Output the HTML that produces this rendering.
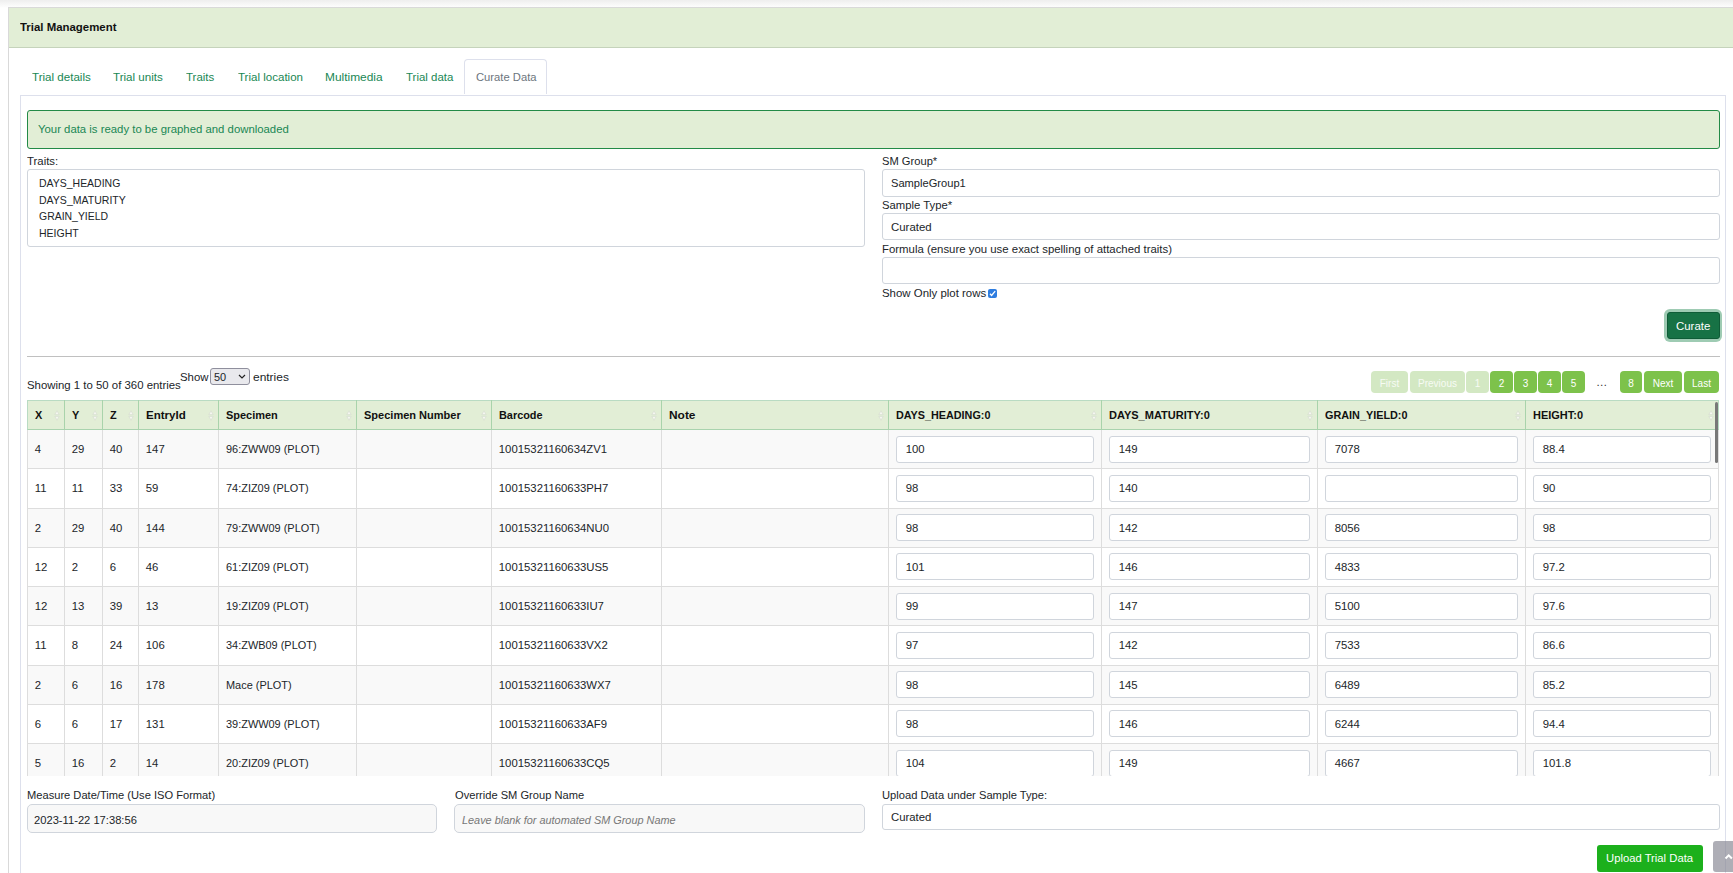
<!DOCTYPE html>
<html><head><meta charset="utf-8"><style>
html,body{margin:0;padding:0;}
body{width:1733px;height:873px;overflow:hidden;position:relative;background:#fff;font-family:"Liberation Sans",sans-serif;}
.t{position:absolute;line-height:1;white-space:nowrap;}
.b{position:absolute;}
</style></head><body>
<div class="b" style="left:0.00px;top:0.00px;width:1733.00px;height:8.00px;background:linear-gradient(#eeeeee,#ffffff);"></div>
<div class="b" style="left:8.00px;top:7.00px;width:1752.00px;height:893.00px;border:1px solid #d9d9d9;background:#fff;box-sizing:border-box;"></div>
<div class="b" style="left:9.00px;top:8.00px;width:1724.00px;height:40.00px;background:#e2eed6;border-bottom:1px solid #c5d3bb;box-sizing:border-box;"></div>
<div class="t" style="left:20.00px;top:22.39px;font-size:11.35px;font-weight:bold;color:#111;transform:scaleX(1.0070);transform-origin:0 0;">Trial Management</div>
<div class="b" style="left:20.00px;top:95.00px;width:1706.00px;height:805.00px;border:1px solid #dde0ec;box-sizing:border-box;"></div>
<div class="t" style="left:32.00px;top:72.39px;font-size:11.35px;font-weight:normal;color:#198754;transform:scaleX(1.0212);transform-origin:0 0;">Trial details</div>
<div class="t" style="left:113.00px;top:72.39px;font-size:11.35px;font-weight:normal;color:#198754;transform:scaleX(1.0215);transform-origin:0 0;">Trial units</div>
<div class="t" style="left:186.10px;top:72.39px;font-size:11.35px;font-weight:normal;color:#198754;transform:scaleX(1.0124);transform-origin:0 0;">Traits</div>
<div class="t" style="left:237.50px;top:72.39px;font-size:11.35px;font-weight:normal;color:#198754;transform:scaleX(1.0174);transform-origin:0 0;">Trial location</div>
<div class="t" style="left:325.40px;top:72.39px;font-size:11.35px;font-weight:normal;color:#198754;transform:scaleX(1.0500);transform-origin:0 0;">Multimedia</div>
<div class="t" style="left:405.90px;top:72.39px;font-size:11.35px;font-weight:normal;color:#198754;transform:scaleX(1.0091);transform-origin:0 0;">Trial data</div>
<div class="b" style="left:464.00px;top:59.00px;width:83.00px;height:35.00px;border:1px solid #dde0ec;border-bottom:none;border-radius:4px 4px 0 0;background:#fff;box-sizing:border-box;"></div>
<div class="t" style="left:475.60px;top:72.39px;font-size:11.35px;font-weight:normal;color:#6c757d;transform:scaleX(0.9890);transform-origin:0 0;">Curate Data</div>
<div class="b" style="left:27.00px;top:110.00px;width:1693.00px;height:39.00px;border:1px solid #238a47;border-radius:3px;background:#e2eed6;box-sizing:border-box;"></div>
<div class="t" style="left:38.40px;top:124.39px;font-size:11.35px;font-weight:normal;color:#198754;transform:scaleX(1.0008);transform-origin:0 0;">Your data is ready to be graphed and downloaded</div>
<div class="t" style="left:27.40px;top:156.39px;font-size:11.35px;font-weight:normal;color:#212529;transform:scaleX(1.0034);transform-origin:0 0;">Traits:</div>
<div class="b" style="left:27.00px;top:169.00px;width:838.00px;height:78.00px;border:1px solid #d0d5dc;border-radius:3px;box-sizing:border-box;"></div>
<div class="t" style="left:39.00px;top:178.39px;font-size:11.35px;font-weight:normal;color:#212529;transform:scaleX(0.9234);transform-origin:0 0;">DAYS_HEADING</div>
<div class="t" style="left:39.00px;top:194.99px;font-size:11.35px;font-weight:normal;color:#212529;transform:scaleX(0.9283);transform-origin:0 0;">DAYS_MATURITY</div>
<div class="t" style="left:39.00px;top:210.99px;font-size:11.35px;font-weight:normal;color:#212529;transform:scaleX(0.9209);transform-origin:0 0;">GRAIN_YIELD</div>
<div class="t" style="left:39.00px;top:228.19px;font-size:11.35px;font-weight:normal;color:#212529;transform:scaleX(0.9263);transform-origin:0 0;">HEIGHT</div>
<div class="t" style="left:881.60px;top:156.39px;font-size:11.35px;font-weight:normal;color:#212529;transform:scaleX(0.9835);transform-origin:0 0;">SM Group*</div>
<div class="b" style="left:882.00px;top:169.00px;width:838.00px;height:28.00px;border:1px solid #d0d5dc;border-radius:3px;background:#fff;box-sizing:border-box;"></div>
<div class="t" style="left:891.00px;top:178.39px;font-size:11.35px;font-weight:normal;color:#212529;transform:scaleX(0.9802);transform-origin:0 0;">SampleGroup1</div>
<div class="t" style="left:881.60px;top:200.39px;font-size:11.35px;font-weight:normal;color:#212529;transform:scaleX(0.9954);transform-origin:0 0;">Sample Type*</div>
<div class="b" style="left:882.00px;top:213.00px;width:838.00px;height:27.00px;border:1px solid #d0d5dc;border-radius:3px;background:#fff;box-sizing:border-box;"></div>
<div class="t" style="left:891.00px;top:222.39px;font-size:11.35px;font-weight:normal;color:#212529;transform:scaleX(1.0060);transform-origin:0 0;">Curated</div>
<div class="t" style="left:881.60px;top:244.39px;font-size:11.35px;font-weight:normal;color:#212529;transform:scaleX(1.0042);transform-origin:0 0;">Formula (ensure you use exact spelling of attached traits)</div>
<div class="b" style="left:882.00px;top:257.00px;width:838.00px;height:27.00px;border:1px solid #d0d5dc;border-radius:3px;background:#fff;box-sizing:border-box;"></div>
<div class="t" style="left:881.60px;top:288.39px;font-size:11.35px;font-weight:normal;color:#212529;transform:scaleX(1.0077);transform-origin:0 0;">Show Only plot rows</div>
<div class="b" style="left:988px;top:289px;width:9px;height:9px;background:#2e7de0;border-radius:2px;"><svg width="9" height="9" viewBox="0 0 9 9" style="position:absolute;left:0;top:0"><path d="M2 4.8 L3.6 6.5 L7.2 2.2" stroke="#fff" stroke-width="1.3" fill="none"/></svg></div>
<div class="b" style="left:1664.20px;top:309.20px;width:57.80px;height:32.60px;background:#9ecbb3;border-radius:6px;"></div>
<div class="b" style="left:1666.70px;top:311.70px;width:53.60px;height:27.20px;background:#177245;border:1px solid #0f5c37;border-radius:3px;box-sizing:border-box;"></div>
<div class="t" style="left:1676.00px;top:321.39px;font-size:11.35px;font-weight:normal;color:#fff;transform:scaleX(1.0070);transform-origin:0 0;">Curate</div>
<div class="b" style="left:27.00px;top:356.00px;width:1693.00px;height:1.00px;background:#c0c0c0;"></div>
<div class="t" style="left:27.00px;top:380.39px;font-size:11.35px;font-weight:normal;color:#212529;transform:scaleX(1.0036);transform-origin:0 0;">Showing 1 to 50 of 360 entries</div>
<div class="t" style="left:180.00px;top:372.39px;font-size:11.35px;font-weight:normal;color:#212529;transform:scaleX(1.0039);transform-origin:0 0;">Show</div>
<div class="b" style="left:210.00px;top:368.00px;width:40.00px;height:17.00px;border:1px solid #8f8f9d;border-radius:3px;background:#e9e9ed;box-sizing:border-box;"></div>
<div class="t" style="left:214.30px;top:371.18px;font-size:11.6px;font-weight:normal;color:#212529;transform:scaleX(0.9453);transform-origin:0 0;">50</div>
<svg class="b" style="left:238px;top:374px" width="8" height="5" viewBox="0 0 8 5"><path d="M1 1 L4 4 L7 1" stroke="#222" stroke-width="1.2" fill="none"/></svg>
<div class="t" style="left:252.70px;top:372.39px;font-size:11.35px;font-weight:normal;color:#212529;transform:scaleX(1.0539);transform-origin:0 0;">entries</div>
<div class="b" style="left:1371px;top:371px;width:37px;height:22px;background:#d3e8c3;border-radius:4px;"></div>
<div class="t" style="left:1371px;top:378.535px;width:37px;text-align:center;font-size:10px;color:#f7fbf4">First</div>
<div class="b" style="left:1410px;top:371px;width:55px;height:22px;background:#d3e8c3;border-radius:4px;"></div>
<div class="t" style="left:1410px;top:378.535px;width:55px;text-align:center;font-size:10px;color:#f7fbf4">Previous</div>
<div class="b" style="left:1466px;top:371px;width:23px;height:22px;background:#d3e8c3;border-radius:4px;"></div>
<div class="t" style="left:1466px;top:378.535px;width:23px;text-align:center;font-size:10px;color:#f7fbf4">1</div>
<div class="b" style="left:1490px;top:371px;width:23px;height:22px;background:#7dc24b;border-radius:4px;"></div>
<div class="t" style="left:1490px;top:378.535px;width:23px;text-align:center;font-size:10px;color:#fff">2</div>
<div class="b" style="left:1514px;top:371px;width:23px;height:22px;background:#7dc24b;border-radius:4px;"></div>
<div class="t" style="left:1514px;top:378.535px;width:23px;text-align:center;font-size:10px;color:#fff">3</div>
<div class="b" style="left:1538px;top:371px;width:23px;height:22px;background:#7dc24b;border-radius:4px;"></div>
<div class="t" style="left:1538px;top:378.535px;width:23px;text-align:center;font-size:10px;color:#fff">4</div>
<div class="b" style="left:1562px;top:371px;width:23px;height:22px;background:#7dc24b;border-radius:4px;"></div>
<div class="t" style="left:1562px;top:378.535px;width:23px;text-align:center;font-size:10px;color:#fff">5</div>
<div class="b" style="left:1620px;top:371px;width:22px;height:22px;background:#7dc24b;border-radius:4px;"></div>
<div class="t" style="left:1620px;top:378.535px;width:22px;text-align:center;font-size:10px;color:#fff">8</div>
<div class="b" style="left:1644px;top:371px;width:38px;height:22px;background:#7dc24b;border-radius:4px;"></div>
<div class="t" style="left:1644px;top:378.535px;width:38px;text-align:center;font-size:10px;color:#fff">Next</div>
<div class="b" style="left:1684px;top:371px;width:35px;height:22px;background:#7dc24b;border-radius:4px;"></div>
<div class="t" style="left:1684px;top:378.535px;width:35px;text-align:center;font-size:10px;color:#fff">Last</div>
<div class="t" style="left:1596.00px;top:377.39px;font-size:11.35px;font-weight:normal;color:#333;">…</div>
<div class="b" style="left:0;top:0;width:1733px;height:776px;overflow:hidden">
<div class="b" style="left:27.00px;top:430.00px;width:1692.00px;height:39.00px;background:#f9f9f9;border-bottom:1px solid #dddddd;box-sizing:border-box;"></div>
<div class="t" style="left:34.80px;top:443.99px;font-size:11.35px;font-weight:normal;color:#212529;">4</div>
<div class="t" style="left:71.80px;top:443.99px;font-size:11.35px;font-weight:normal;color:#212529;">29</div>
<div class="t" style="left:109.80px;top:443.99px;font-size:11.35px;font-weight:normal;color:#212529;">40</div>
<div class="t" style="left:145.80px;top:443.99px;font-size:11.35px;font-weight:normal;color:#212529;">147</div>
<div class="t" style="left:225.80px;top:443.99px;font-size:11.35px;font-weight:normal;color:#212529;transform:scaleX(0.964);transform-origin:0 0;">96:ZWW09 (PLOT)</div>
<div class="t" style="left:498.80px;top:443.99px;font-size:11.35px;font-weight:normal;color:#212529;">10015321160634ZV1</div>
<div class="b" style="left:896.00px;top:436.00px;width:198.00px;height:27.00px;border:1px solid #d0d5dc;border-radius:3px;background:#fff;box-sizing:border-box;"></div>
<div class="t" style="left:905.70px;top:443.99px;font-size:11.35px;font-weight:normal;color:#212529;">100</div>
<div class="b" style="left:1109.00px;top:436.00px;width:201.00px;height:27.00px;border:1px solid #d0d5dc;border-radius:3px;background:#fff;box-sizing:border-box;"></div>
<div class="t" style="left:1118.70px;top:443.99px;font-size:11.35px;font-weight:normal;color:#212529;">149</div>
<div class="b" style="left:1325.00px;top:436.00px;width:193.00px;height:27.00px;border:1px solid #d0d5dc;border-radius:3px;background:#fff;box-sizing:border-box;"></div>
<div class="t" style="left:1334.70px;top:443.99px;font-size:11.35px;font-weight:normal;color:#212529;">7078</div>
<div class="b" style="left:1533.00px;top:436.00px;width:178.00px;height:27.00px;border:1px solid #d0d5dc;border-radius:3px;background:#fff;box-sizing:border-box;"></div>
<div class="t" style="left:1542.70px;top:443.99px;font-size:11.35px;font-weight:normal;color:#212529;">88.4</div>
<div class="b" style="left:27.00px;top:469.00px;width:1692.00px;height:40.00px;background:#fff;border-bottom:1px solid #dddddd;box-sizing:border-box;"></div>
<div class="t" style="left:34.80px;top:482.99px;font-size:11.35px;font-weight:normal;color:#212529;">11</div>
<div class="t" style="left:71.80px;top:482.99px;font-size:11.35px;font-weight:normal;color:#212529;">11</div>
<div class="t" style="left:109.80px;top:482.99px;font-size:11.35px;font-weight:normal;color:#212529;">33</div>
<div class="t" style="left:145.80px;top:482.99px;font-size:11.35px;font-weight:normal;color:#212529;">59</div>
<div class="t" style="left:225.80px;top:482.99px;font-size:11.35px;font-weight:normal;color:#212529;transform:scaleX(0.964);transform-origin:0 0;">74:ZIZ09 (PLOT)</div>
<div class="t" style="left:498.80px;top:482.99px;font-size:11.35px;font-weight:normal;color:#212529;">10015321160633PH7</div>
<div class="b" style="left:896.00px;top:475.00px;width:198.00px;height:27.00px;border:1px solid #d0d5dc;border-radius:3px;background:#fff;box-sizing:border-box;"></div>
<div class="t" style="left:905.70px;top:482.99px;font-size:11.35px;font-weight:normal;color:#212529;">98</div>
<div class="b" style="left:1109.00px;top:475.00px;width:201.00px;height:27.00px;border:1px solid #d0d5dc;border-radius:3px;background:#fff;box-sizing:border-box;"></div>
<div class="t" style="left:1118.70px;top:482.99px;font-size:11.35px;font-weight:normal;color:#212529;">140</div>
<div class="b" style="left:1325.00px;top:475.00px;width:193.00px;height:27.00px;border:1px solid #d0d5dc;border-radius:3px;background:#fff;box-sizing:border-box;"></div>
<div class="b" style="left:1533.00px;top:475.00px;width:178.00px;height:27.00px;border:1px solid #d0d5dc;border-radius:3px;background:#fff;box-sizing:border-box;"></div>
<div class="t" style="left:1542.70px;top:482.99px;font-size:11.35px;font-weight:normal;color:#212529;">90</div>
<div class="b" style="left:27.00px;top:509.00px;width:1692.00px;height:39.00px;background:#f9f9f9;border-bottom:1px solid #dddddd;box-sizing:border-box;"></div>
<div class="t" style="left:34.80px;top:522.99px;font-size:11.35px;font-weight:normal;color:#212529;">2</div>
<div class="t" style="left:71.80px;top:522.99px;font-size:11.35px;font-weight:normal;color:#212529;">29</div>
<div class="t" style="left:109.80px;top:522.99px;font-size:11.35px;font-weight:normal;color:#212529;">40</div>
<div class="t" style="left:145.80px;top:522.99px;font-size:11.35px;font-weight:normal;color:#212529;">144</div>
<div class="t" style="left:225.80px;top:522.99px;font-size:11.35px;font-weight:normal;color:#212529;transform:scaleX(0.964);transform-origin:0 0;">79:ZWW09 (PLOT)</div>
<div class="t" style="left:498.80px;top:522.99px;font-size:11.35px;font-weight:normal;color:#212529;">10015321160634NU0</div>
<div class="b" style="left:896.00px;top:514.00px;width:198.00px;height:27.00px;border:1px solid #d0d5dc;border-radius:3px;background:#fff;box-sizing:border-box;"></div>
<div class="t" style="left:905.70px;top:522.99px;font-size:11.35px;font-weight:normal;color:#212529;">98</div>
<div class="b" style="left:1109.00px;top:514.00px;width:201.00px;height:27.00px;border:1px solid #d0d5dc;border-radius:3px;background:#fff;box-sizing:border-box;"></div>
<div class="t" style="left:1118.70px;top:522.99px;font-size:11.35px;font-weight:normal;color:#212529;">142</div>
<div class="b" style="left:1325.00px;top:514.00px;width:193.00px;height:27.00px;border:1px solid #d0d5dc;border-radius:3px;background:#fff;box-sizing:border-box;"></div>
<div class="t" style="left:1334.70px;top:522.99px;font-size:11.35px;font-weight:normal;color:#212529;">8056</div>
<div class="b" style="left:1533.00px;top:514.00px;width:178.00px;height:27.00px;border:1px solid #d0d5dc;border-radius:3px;background:#fff;box-sizing:border-box;"></div>
<div class="t" style="left:1542.70px;top:522.99px;font-size:11.35px;font-weight:normal;color:#212529;">98</div>
<div class="b" style="left:27.00px;top:548.00px;width:1692.00px;height:39.00px;background:#fff;border-bottom:1px solid #dddddd;box-sizing:border-box;"></div>
<div class="t" style="left:34.80px;top:561.99px;font-size:11.35px;font-weight:normal;color:#212529;">12</div>
<div class="t" style="left:71.80px;top:561.99px;font-size:11.35px;font-weight:normal;color:#212529;">2</div>
<div class="t" style="left:109.80px;top:561.99px;font-size:11.35px;font-weight:normal;color:#212529;">6</div>
<div class="t" style="left:145.80px;top:561.99px;font-size:11.35px;font-weight:normal;color:#212529;">46</div>
<div class="t" style="left:225.80px;top:561.99px;font-size:11.35px;font-weight:normal;color:#212529;transform:scaleX(0.964);transform-origin:0 0;">61:ZIZ09 (PLOT)</div>
<div class="t" style="left:498.80px;top:561.99px;font-size:11.35px;font-weight:normal;color:#212529;">10015321160633US5</div>
<div class="b" style="left:896.00px;top:553.00px;width:198.00px;height:27.00px;border:1px solid #d0d5dc;border-radius:3px;background:#fff;box-sizing:border-box;"></div>
<div class="t" style="left:905.70px;top:561.99px;font-size:11.35px;font-weight:normal;color:#212529;">101</div>
<div class="b" style="left:1109.00px;top:553.00px;width:201.00px;height:27.00px;border:1px solid #d0d5dc;border-radius:3px;background:#fff;box-sizing:border-box;"></div>
<div class="t" style="left:1118.70px;top:561.99px;font-size:11.35px;font-weight:normal;color:#212529;">146</div>
<div class="b" style="left:1325.00px;top:553.00px;width:193.00px;height:27.00px;border:1px solid #d0d5dc;border-radius:3px;background:#fff;box-sizing:border-box;"></div>
<div class="t" style="left:1334.70px;top:561.99px;font-size:11.35px;font-weight:normal;color:#212529;">4833</div>
<div class="b" style="left:1533.00px;top:553.00px;width:178.00px;height:27.00px;border:1px solid #d0d5dc;border-radius:3px;background:#fff;box-sizing:border-box;"></div>
<div class="t" style="left:1542.70px;top:561.99px;font-size:11.35px;font-weight:normal;color:#212529;">97.2</div>
<div class="b" style="left:27.00px;top:587.00px;width:1692.00px;height:39.00px;background:#f9f9f9;border-bottom:1px solid #dddddd;box-sizing:border-box;"></div>
<div class="t" style="left:34.80px;top:600.99px;font-size:11.35px;font-weight:normal;color:#212529;">12</div>
<div class="t" style="left:71.80px;top:600.99px;font-size:11.35px;font-weight:normal;color:#212529;">13</div>
<div class="t" style="left:109.80px;top:600.99px;font-size:11.35px;font-weight:normal;color:#212529;">39</div>
<div class="t" style="left:145.80px;top:600.99px;font-size:11.35px;font-weight:normal;color:#212529;">13</div>
<div class="t" style="left:225.80px;top:600.99px;font-size:11.35px;font-weight:normal;color:#212529;transform:scaleX(0.964);transform-origin:0 0;">19:ZIZ09 (PLOT)</div>
<div class="t" style="left:498.80px;top:600.99px;font-size:11.35px;font-weight:normal;color:#212529;">10015321160633IU7</div>
<div class="b" style="left:896.00px;top:593.00px;width:198.00px;height:27.00px;border:1px solid #d0d5dc;border-radius:3px;background:#fff;box-sizing:border-box;"></div>
<div class="t" style="left:905.70px;top:600.99px;font-size:11.35px;font-weight:normal;color:#212529;">99</div>
<div class="b" style="left:1109.00px;top:593.00px;width:201.00px;height:27.00px;border:1px solid #d0d5dc;border-radius:3px;background:#fff;box-sizing:border-box;"></div>
<div class="t" style="left:1118.70px;top:600.99px;font-size:11.35px;font-weight:normal;color:#212529;">147</div>
<div class="b" style="left:1325.00px;top:593.00px;width:193.00px;height:27.00px;border:1px solid #d0d5dc;border-radius:3px;background:#fff;box-sizing:border-box;"></div>
<div class="t" style="left:1334.70px;top:600.99px;font-size:11.35px;font-weight:normal;color:#212529;">5100</div>
<div class="b" style="left:1533.00px;top:593.00px;width:178.00px;height:27.00px;border:1px solid #d0d5dc;border-radius:3px;background:#fff;box-sizing:border-box;"></div>
<div class="t" style="left:1542.70px;top:600.99px;font-size:11.35px;font-weight:normal;color:#212529;">97.6</div>
<div class="b" style="left:27.00px;top:626.00px;width:1692.00px;height:40.00px;background:#fff;border-bottom:1px solid #dddddd;box-sizing:border-box;"></div>
<div class="t" style="left:34.80px;top:639.99px;font-size:11.35px;font-weight:normal;color:#212529;">11</div>
<div class="t" style="left:71.80px;top:639.99px;font-size:11.35px;font-weight:normal;color:#212529;">8</div>
<div class="t" style="left:109.80px;top:639.99px;font-size:11.35px;font-weight:normal;color:#212529;">24</div>
<div class="t" style="left:145.80px;top:639.99px;font-size:11.35px;font-weight:normal;color:#212529;">106</div>
<div class="t" style="left:225.80px;top:639.99px;font-size:11.35px;font-weight:normal;color:#212529;transform:scaleX(0.964);transform-origin:0 0;">34:ZWB09 (PLOT)</div>
<div class="t" style="left:498.80px;top:639.99px;font-size:11.35px;font-weight:normal;color:#212529;">10015321160633VX2</div>
<div class="b" style="left:896.00px;top:632.00px;width:198.00px;height:27.00px;border:1px solid #d0d5dc;border-radius:3px;background:#fff;box-sizing:border-box;"></div>
<div class="t" style="left:905.70px;top:639.99px;font-size:11.35px;font-weight:normal;color:#212529;">97</div>
<div class="b" style="left:1109.00px;top:632.00px;width:201.00px;height:27.00px;border:1px solid #d0d5dc;border-radius:3px;background:#fff;box-sizing:border-box;"></div>
<div class="t" style="left:1118.70px;top:639.99px;font-size:11.35px;font-weight:normal;color:#212529;">142</div>
<div class="b" style="left:1325.00px;top:632.00px;width:193.00px;height:27.00px;border:1px solid #d0d5dc;border-radius:3px;background:#fff;box-sizing:border-box;"></div>
<div class="t" style="left:1334.70px;top:639.99px;font-size:11.35px;font-weight:normal;color:#212529;">7533</div>
<div class="b" style="left:1533.00px;top:632.00px;width:178.00px;height:27.00px;border:1px solid #d0d5dc;border-radius:3px;background:#fff;box-sizing:border-box;"></div>
<div class="t" style="left:1542.70px;top:639.99px;font-size:11.35px;font-weight:normal;color:#212529;">86.6</div>
<div class="b" style="left:27.00px;top:666.00px;width:1692.00px;height:39.00px;background:#f9f9f9;border-bottom:1px solid #dddddd;box-sizing:border-box;"></div>
<div class="t" style="left:34.80px;top:679.99px;font-size:11.35px;font-weight:normal;color:#212529;">2</div>
<div class="t" style="left:71.80px;top:679.99px;font-size:11.35px;font-weight:normal;color:#212529;">6</div>
<div class="t" style="left:109.80px;top:679.99px;font-size:11.35px;font-weight:normal;color:#212529;">16</div>
<div class="t" style="left:145.80px;top:679.99px;font-size:11.35px;font-weight:normal;color:#212529;">178</div>
<div class="t" style="left:225.80px;top:679.99px;font-size:11.35px;font-weight:normal;color:#212529;transform:scaleX(0.964);transform-origin:0 0;">Mace (PLOT)</div>
<div class="t" style="left:498.80px;top:679.99px;font-size:11.35px;font-weight:normal;color:#212529;">10015321160633WX7</div>
<div class="b" style="left:896.00px;top:671.00px;width:198.00px;height:27.00px;border:1px solid #d0d5dc;border-radius:3px;background:#fff;box-sizing:border-box;"></div>
<div class="t" style="left:905.70px;top:679.99px;font-size:11.35px;font-weight:normal;color:#212529;">98</div>
<div class="b" style="left:1109.00px;top:671.00px;width:201.00px;height:27.00px;border:1px solid #d0d5dc;border-radius:3px;background:#fff;box-sizing:border-box;"></div>
<div class="t" style="left:1118.70px;top:679.99px;font-size:11.35px;font-weight:normal;color:#212529;">145</div>
<div class="b" style="left:1325.00px;top:671.00px;width:193.00px;height:27.00px;border:1px solid #d0d5dc;border-radius:3px;background:#fff;box-sizing:border-box;"></div>
<div class="t" style="left:1334.70px;top:679.99px;font-size:11.35px;font-weight:normal;color:#212529;">6489</div>
<div class="b" style="left:1533.00px;top:671.00px;width:178.00px;height:27.00px;border:1px solid #d0d5dc;border-radius:3px;background:#fff;box-sizing:border-box;"></div>
<div class="t" style="left:1542.70px;top:679.99px;font-size:11.35px;font-weight:normal;color:#212529;">85.2</div>
<div class="b" style="left:27.00px;top:705.00px;width:1692.00px;height:39.00px;background:#fff;border-bottom:1px solid #dddddd;box-sizing:border-box;"></div>
<div class="t" style="left:34.80px;top:718.99px;font-size:11.35px;font-weight:normal;color:#212529;">6</div>
<div class="t" style="left:71.80px;top:718.99px;font-size:11.35px;font-weight:normal;color:#212529;">6</div>
<div class="t" style="left:109.80px;top:718.99px;font-size:11.35px;font-weight:normal;color:#212529;">17</div>
<div class="t" style="left:145.80px;top:718.99px;font-size:11.35px;font-weight:normal;color:#212529;">131</div>
<div class="t" style="left:225.80px;top:718.99px;font-size:11.35px;font-weight:normal;color:#212529;transform:scaleX(0.964);transform-origin:0 0;">39:ZWW09 (PLOT)</div>
<div class="t" style="left:498.80px;top:718.99px;font-size:11.35px;font-weight:normal;color:#212529;">10015321160633AF9</div>
<div class="b" style="left:896.00px;top:710.00px;width:198.00px;height:27.00px;border:1px solid #d0d5dc;border-radius:3px;background:#fff;box-sizing:border-box;"></div>
<div class="t" style="left:905.70px;top:718.99px;font-size:11.35px;font-weight:normal;color:#212529;">98</div>
<div class="b" style="left:1109.00px;top:710.00px;width:201.00px;height:27.00px;border:1px solid #d0d5dc;border-radius:3px;background:#fff;box-sizing:border-box;"></div>
<div class="t" style="left:1118.70px;top:718.99px;font-size:11.35px;font-weight:normal;color:#212529;">146</div>
<div class="b" style="left:1325.00px;top:710.00px;width:193.00px;height:27.00px;border:1px solid #d0d5dc;border-radius:3px;background:#fff;box-sizing:border-box;"></div>
<div class="t" style="left:1334.70px;top:718.99px;font-size:11.35px;font-weight:normal;color:#212529;">6244</div>
<div class="b" style="left:1533.00px;top:710.00px;width:178.00px;height:27.00px;border:1px solid #d0d5dc;border-radius:3px;background:#fff;box-sizing:border-box;"></div>
<div class="t" style="left:1542.70px;top:718.99px;font-size:11.35px;font-weight:normal;color:#212529;">94.4</div>
<div class="b" style="left:27.00px;top:744.00px;width:1692.00px;height:39.00px;background:#f9f9f9;border-bottom:1px solid #dddddd;box-sizing:border-box;"></div>
<div class="t" style="left:34.80px;top:757.99px;font-size:11.35px;font-weight:normal;color:#212529;">5</div>
<div class="t" style="left:71.80px;top:757.99px;font-size:11.35px;font-weight:normal;color:#212529;">16</div>
<div class="t" style="left:109.80px;top:757.99px;font-size:11.35px;font-weight:normal;color:#212529;">2</div>
<div class="t" style="left:145.80px;top:757.99px;font-size:11.35px;font-weight:normal;color:#212529;">14</div>
<div class="t" style="left:225.80px;top:757.99px;font-size:11.35px;font-weight:normal;color:#212529;transform:scaleX(0.964);transform-origin:0 0;">20:ZIZ09 (PLOT)</div>
<div class="t" style="left:498.80px;top:757.99px;font-size:11.35px;font-weight:normal;color:#212529;">10015321160633CQ5</div>
<div class="b" style="left:896.00px;top:750.00px;width:198.00px;height:27.00px;border:1px solid #d0d5dc;border-radius:3px;background:#fff;box-sizing:border-box;"></div>
<div class="t" style="left:905.70px;top:757.99px;font-size:11.35px;font-weight:normal;color:#212529;">104</div>
<div class="b" style="left:1109.00px;top:750.00px;width:201.00px;height:27.00px;border:1px solid #d0d5dc;border-radius:3px;background:#fff;box-sizing:border-box;"></div>
<div class="t" style="left:1118.70px;top:757.99px;font-size:11.35px;font-weight:normal;color:#212529;">149</div>
<div class="b" style="left:1325.00px;top:750.00px;width:193.00px;height:27.00px;border:1px solid #d0d5dc;border-radius:3px;background:#fff;box-sizing:border-box;"></div>
<div class="t" style="left:1334.70px;top:757.99px;font-size:11.35px;font-weight:normal;color:#212529;">4667</div>
<div class="b" style="left:1533.00px;top:750.00px;width:178.00px;height:27.00px;border:1px solid #d0d5dc;border-radius:3px;background:#fff;box-sizing:border-box;"></div>
<div class="t" style="left:1542.70px;top:757.99px;font-size:11.35px;font-weight:normal;color:#212529;">101.8</div>
<div class="b" style="left:27.00px;top:429.00px;width:1.00px;height:371.00px;background:#dddddd;"></div>
<div class="b" style="left:64.00px;top:429.00px;width:1.00px;height:371.00px;background:#dddddd;"></div>
<div class="b" style="left:102.00px;top:429.00px;width:1.00px;height:371.00px;background:#dddddd;"></div>
<div class="b" style="left:138.00px;top:429.00px;width:1.00px;height:371.00px;background:#dddddd;"></div>
<div class="b" style="left:218.00px;top:429.00px;width:1.00px;height:371.00px;background:#dddddd;"></div>
<div class="b" style="left:356.00px;top:429.00px;width:1.00px;height:371.00px;background:#dddddd;"></div>
<div class="b" style="left:491.00px;top:429.00px;width:1.00px;height:371.00px;background:#dddddd;"></div>
<div class="b" style="left:661.00px;top:429.00px;width:1.00px;height:371.00px;background:#dddddd;"></div>
<div class="b" style="left:888.00px;top:429.00px;width:1.00px;height:371.00px;background:#dddddd;"></div>
<div class="b" style="left:1101.00px;top:429.00px;width:1.00px;height:371.00px;background:#dddddd;"></div>
<div class="b" style="left:1317.00px;top:429.00px;width:1.00px;height:371.00px;background:#dddddd;"></div>
<div class="b" style="left:1525.00px;top:429.00px;width:1.00px;height:371.00px;background:#dddddd;"></div>
<div class="b" style="left:1718.00px;top:429.00px;width:1.00px;height:371.00px;background:#dddddd;"></div>
<div class="b" style="left:27.00px;top:400.00px;width:1692.00px;height:30.00px;background:#e2eed6;border:1px solid #b9dbc3;border-bottom-color:#a9d3ae;box-sizing:border-box;"></div>
<div class="b" style="left:64.00px;top:400.00px;width:1.00px;height:30.00px;background:#a9d3ab;"></div>
<div class="b" style="left:102.00px;top:400.00px;width:1.00px;height:30.00px;background:#a9d3ab;"></div>
<div class="b" style="left:138.00px;top:400.00px;width:1.00px;height:30.00px;background:#a9d3ab;"></div>
<div class="b" style="left:218.00px;top:400.00px;width:1.00px;height:30.00px;background:#a9d3ab;"></div>
<div class="b" style="left:356.00px;top:400.00px;width:1.00px;height:30.00px;background:#a9d3ab;"></div>
<div class="b" style="left:491.00px;top:400.00px;width:1.00px;height:30.00px;background:#a9d3ab;"></div>
<div class="b" style="left:661.00px;top:400.00px;width:1.00px;height:30.00px;background:#a9d3ab;"></div>
<div class="b" style="left:888.00px;top:400.00px;width:1.00px;height:30.00px;background:#a9d3ab;"></div>
<div class="b" style="left:1101.00px;top:400.00px;width:1.00px;height:30.00px;background:#a9d3ab;"></div>
<div class="b" style="left:1317.00px;top:400.00px;width:1.00px;height:30.00px;background:#a9d3ab;"></div>
<div class="b" style="left:1525.00px;top:400.00px;width:1.00px;height:30.00px;background:#a9d3ab;"></div>
<div class="t" style="left:35.00px;top:409.77px;font-size:10.9px;font-weight:bold;color:#111;">X</div>
<svg class="b" style="left:54px;top:409.5px" width="6" height="11" viewBox="0 0 6 11"><path d="M3 0.8 L5.2 4.6 L0.8 4.6Z M3 10.2 L5.2 6.4 L0.8 6.4Z" fill="#f4f6f0" stroke="#d9dfd3" stroke-width="0.8"/></svg>
<div class="t" style="left:72.00px;top:409.77px;font-size:10.9px;font-weight:bold;color:#111;">Y</div>
<svg class="b" style="left:92px;top:409.5px" width="6" height="11" viewBox="0 0 6 11"><path d="M3 0.8 L5.2 4.6 L0.8 4.6Z M3 10.2 L5.2 6.4 L0.8 6.4Z" fill="#f4f6f0" stroke="#d9dfd3" stroke-width="0.8"/></svg>
<div class="t" style="left:110.00px;top:409.77px;font-size:10.9px;font-weight:bold;color:#111;">Z</div>
<svg class="b" style="left:128px;top:409.5px" width="6" height="11" viewBox="0 0 6 11"><path d="M3 0.8 L5.2 4.6 L0.8 4.6Z M3 10.2 L5.2 6.4 L0.8 6.4Z" fill="#f4f6f0" stroke="#d9dfd3" stroke-width="0.8"/></svg>
<div class="t" style="left:146.00px;top:409.77px;font-size:10.9px;font-weight:bold;color:#111;transform:scaleX(1.0604);transform-origin:0 0;">EntryId</div>
<svg class="b" style="left:208px;top:409.5px" width="6" height="11" viewBox="0 0 6 11"><path d="M3 0.8 L5.2 4.6 L0.8 4.6Z M3 10.2 L5.2 6.4 L0.8 6.4Z" fill="#f4f6f0" stroke="#d9dfd3" stroke-width="0.8"/></svg>
<div class="t" style="left:226.00px;top:409.77px;font-size:10.9px;font-weight:bold;color:#111;transform:scaleX(1.0067);transform-origin:0 0;">Specimen</div>
<svg class="b" style="left:346px;top:409.5px" width="6" height="11" viewBox="0 0 6 11"><path d="M3 0.8 L5.2 4.6 L0.8 4.6Z M3 10.2 L5.2 6.4 L0.8 6.4Z" fill="#f4f6f0" stroke="#d9dfd3" stroke-width="0.8"/></svg>
<div class="t" style="left:364.00px;top:409.77px;font-size:10.9px;font-weight:bold;color:#111;transform:scaleX(1.0112);transform-origin:0 0;">Specimen Number</div>
<svg class="b" style="left:481px;top:409.5px" width="6" height="11" viewBox="0 0 6 11"><path d="M3 0.8 L5.2 4.6 L0.8 4.6Z M3 10.2 L5.2 6.4 L0.8 6.4Z" fill="#f4f6f0" stroke="#d9dfd3" stroke-width="0.8"/></svg>
<div class="t" style="left:499.00px;top:409.77px;font-size:10.9px;font-weight:bold;color:#111;transform:scaleX(1.0001);transform-origin:0 0;">Barcode</div>
<svg class="b" style="left:651px;top:409.5px" width="6" height="11" viewBox="0 0 6 11"><path d="M3 0.8 L5.2 4.6 L0.8 4.6Z M3 10.2 L5.2 6.4 L0.8 6.4Z" fill="#f4f6f0" stroke="#d9dfd3" stroke-width="0.8"/></svg>
<div class="t" style="left:669.00px;top:409.77px;font-size:10.9px;font-weight:bold;color:#111;transform:scaleX(1.0949);transform-origin:0 0;">Note</div>
<svg class="b" style="left:878px;top:409.5px" width="6" height="11" viewBox="0 0 6 11"><path d="M3 0.8 L5.2 4.6 L0.8 4.6Z M3 10.2 L5.2 6.4 L0.8 6.4Z" fill="#f4f6f0" stroke="#d9dfd3" stroke-width="0.8"/></svg>
<div class="t" style="left:896.00px;top:409.77px;font-size:10.9px;font-weight:bold;color:#111;transform:scaleX(0.9914);transform-origin:0 0;">DAYS_HEADING:0</div>
<svg class="b" style="left:1091px;top:409.5px" width="6" height="11" viewBox="0 0 6 11"><path d="M3 0.8 L5.2 4.6 L0.8 4.6Z M3 10.2 L5.2 6.4 L0.8 6.4Z" fill="#f4f6f0" stroke="#d9dfd3" stroke-width="0.8"/></svg>
<div class="t" style="left:1109.00px;top:409.77px;font-size:10.9px;font-weight:bold;color:#111;transform:scaleX(1.0115);transform-origin:0 0;">DAYS_MATURITY:0</div>
<svg class="b" style="left:1307px;top:409.5px" width="6" height="11" viewBox="0 0 6 11"><path d="M3 0.8 L5.2 4.6 L0.8 4.6Z M3 10.2 L5.2 6.4 L0.8 6.4Z" fill="#f4f6f0" stroke="#d9dfd3" stroke-width="0.8"/></svg>
<div class="t" style="left:1325.00px;top:409.77px;font-size:10.9px;font-weight:bold;color:#111;transform:scaleX(0.9951);transform-origin:0 0;">GRAIN_YIELD:0</div>
<svg class="b" style="left:1515px;top:409.5px" width="6" height="11" viewBox="0 0 6 11"><path d="M3 0.8 L5.2 4.6 L0.8 4.6Z M3 10.2 L5.2 6.4 L0.8 6.4Z" fill="#f4f6f0" stroke="#d9dfd3" stroke-width="0.8"/></svg>
<div class="t" style="left:1533.00px;top:409.77px;font-size:10.9px;font-weight:bold;color:#111;transform:scaleX(1.0076);transform-origin:0 0;">HEIGHT:0</div>
<svg class="b" style="left:1708px;top:409.5px" width="6" height="11" viewBox="0 0 6 11"><path d="M3 0.8 L5.2 4.6 L0.8 4.6Z M3 10.2 L5.2 6.4 L0.8 6.4Z" fill="#f4f6f0" stroke="#d9dfd3" stroke-width="0.8"/></svg>
</div>
<div class="b" style="left:1715.00px;top:401.80px;width:3.00px;height:60.90px;background:#787878;border-radius:1.5px;"></div>
<div class="t" style="left:27.10px;top:790.39px;font-size:11.35px;font-weight:normal;color:#212529;transform:scaleX(0.9805);transform-origin:0 0;">Measure Date/Time (Use ISO Format)</div>
<div class="b" style="left:27.00px;top:804.40px;width:409.60px;height:29.00px;border:1px solid #d0d5dc;border-radius:5px;background:#f8f8f8;box-sizing:border-box;"></div>
<div class="t" style="left:33.50px;top:815.19px;font-size:11.35px;font-weight:normal;color:#212529;transform:scaleX(0.9847);transform-origin:0 0;">2023-11-22 17:38:56</div>
<div class="t" style="left:454.60px;top:790.39px;font-size:11.35px;font-weight:normal;color:#212529;transform:scaleX(0.9798);transform-origin:0 0;">Override SM Group Name</div>
<div class="b" style="left:454.30px;top:804.40px;width:410.30px;height:29.00px;border:1px solid #d0d5dc;border-radius:5px;background:#f8f8f8;box-sizing:border-box;"></div>
<div class="t" style="left:461.50px;top:815.19px;font-size:11.35px;font-weight:normal;color:#777;font-style:italic;transform:scaleX(0.9596);transform-origin:0 0;">Leave blank for automated SM Group Name</div>
<div class="t" style="left:881.90px;top:790.39px;font-size:11.35px;font-weight:normal;color:#212529;transform:scaleX(0.9855);transform-origin:0 0;">Upload Data under Sample Type:</div>
<div class="b" style="left:882.00px;top:804.30px;width:838.00px;height:26.20px;border:1px solid #d0d5dc;border-radius:3px;background:#fff;box-sizing:border-box;"></div>
<div class="t" style="left:891.20px;top:812.49px;font-size:11.35px;font-weight:normal;color:#212529;transform:scaleX(1.0010);transform-origin:0 0;">Curated</div>
<div class="b" style="left:1597.00px;top:845.00px;width:106.00px;height:27.00px;background:#1cb01c;border-radius:3px;"></div>
<div class="t" style="left:1606.40px;top:853.39px;font-size:11.35px;font-weight:normal;color:#fff;transform:scaleX(0.9931);transform-origin:0 0;">Upload Trial Data</div>
<div class="b" style="left:1713.00px;top:841.00px;width:32.00px;height:31.00px;background:rgba(135,135,148,0.68);border-radius:3px;"></div>
<svg class="b" style="left:1723px;top:851px" width="12" height="10" viewBox="0 0 12 10"><path d="M2.5 7.5 L5.7 4.3 L8.9 7.5" stroke="#fff" stroke-width="2" fill="none"/></svg>
</body></html>
